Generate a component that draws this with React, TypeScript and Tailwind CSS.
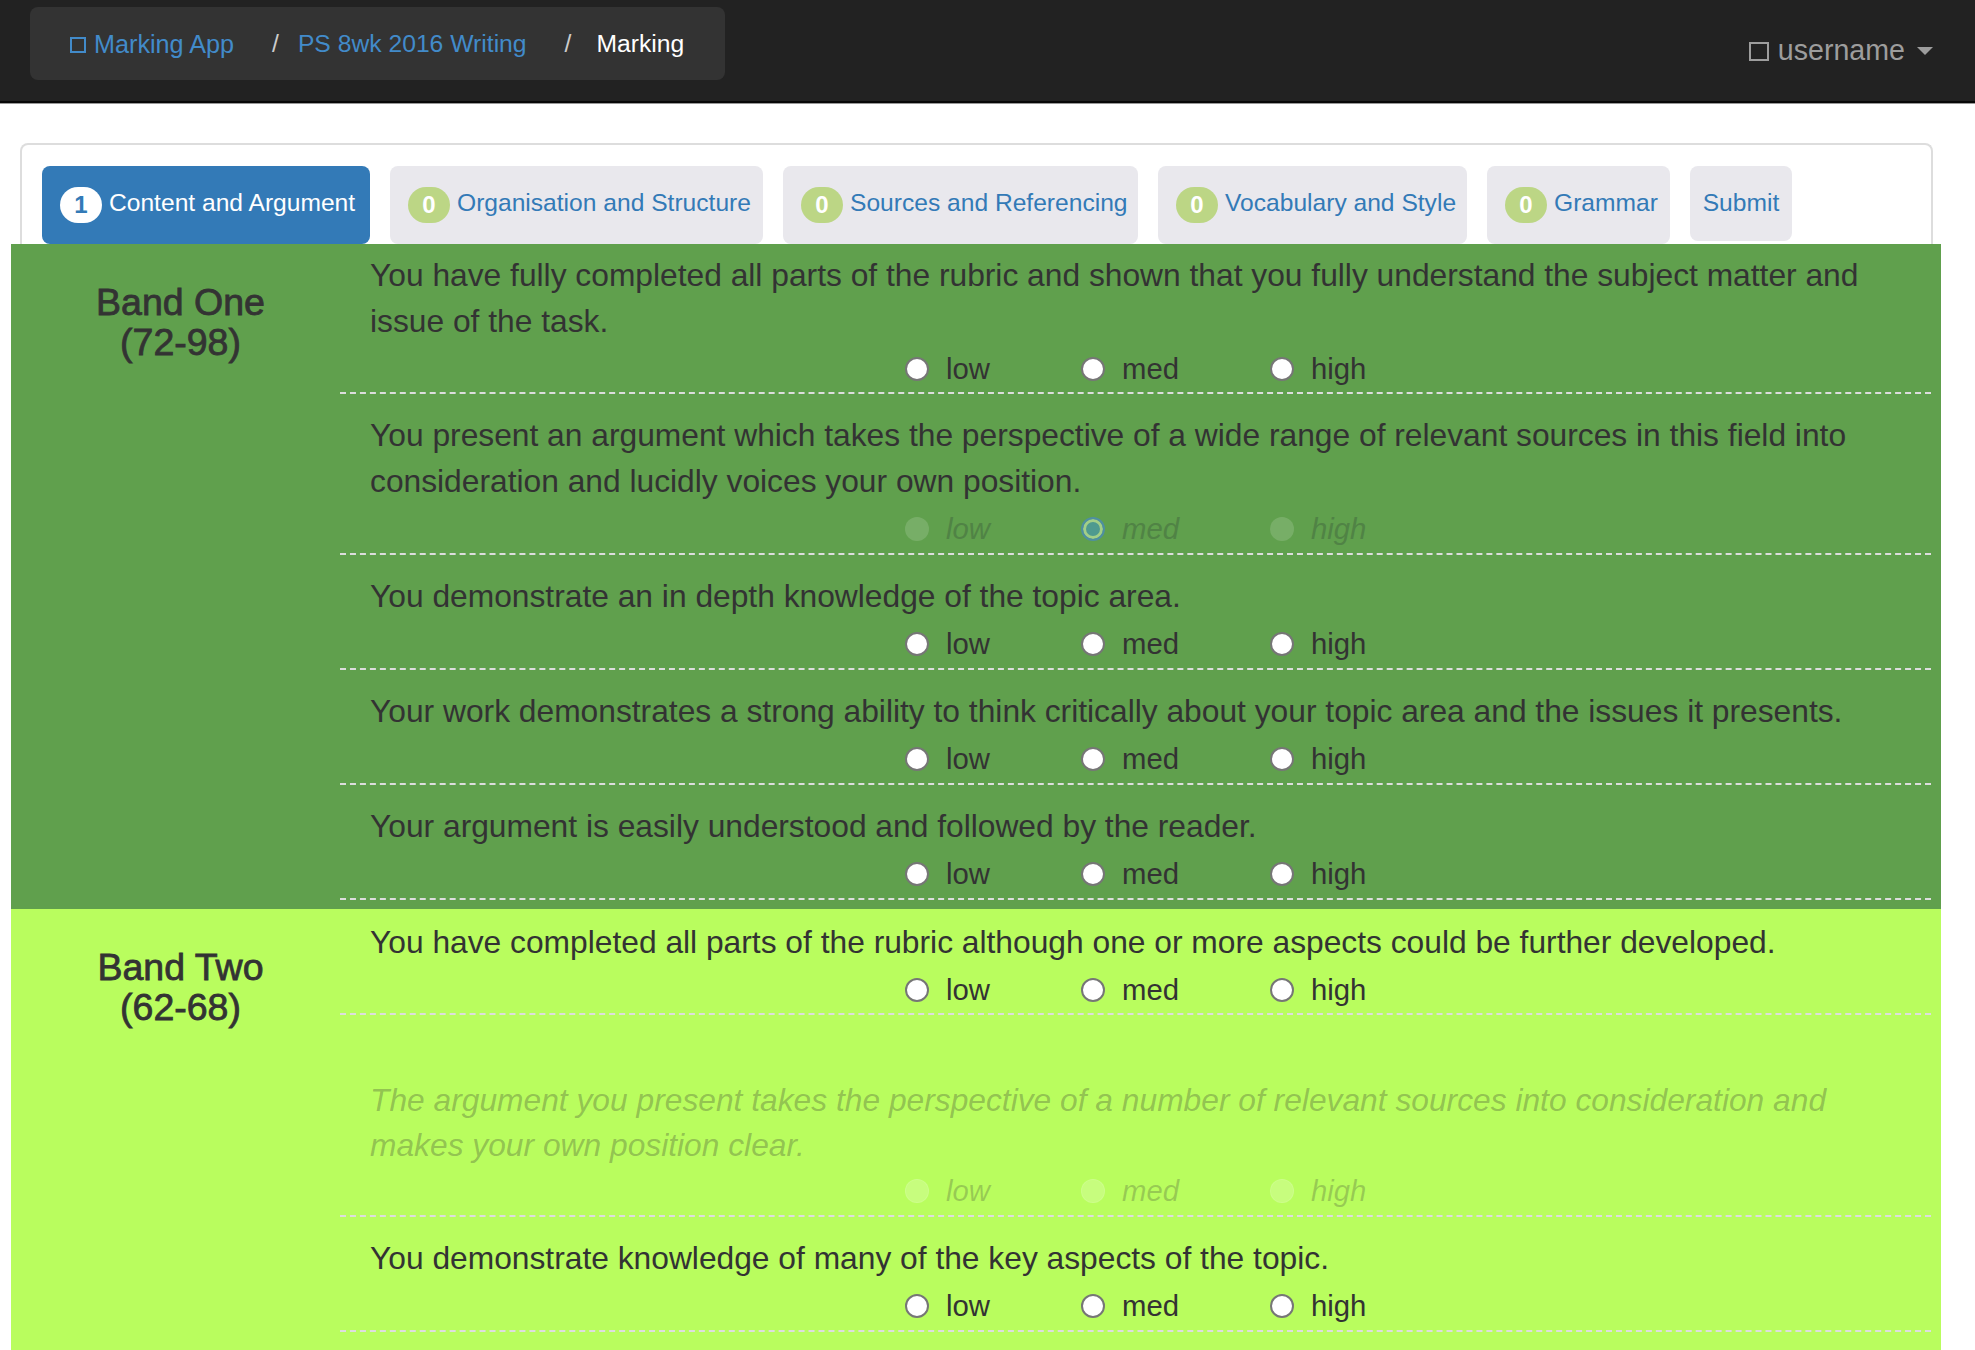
import React from 'react';

type Option = 'low' | 'med' | 'high';

interface Row {
  text: string[];
  muted?: 'options' | 'all';
  selected?: Option;
  pad?: string;
}

interface Band {
  name: string;
  range: string;
  color: string;
  rows: Row[];
}

const tabs = [
  { label: 'Organisation and Structure', width: 'w-[373px]' },
  { label: 'Sources and Referencing', width: 'w-[355px]' },
  { label: 'Vocabulary and Style', width: 'w-[309px]' },
  { label: 'Grammar', width: 'w-[183px]' },
];

const bands: Band[] = [
  {
    name: 'Band One',
    range: '(72-98)',
    color: 'bg-[#60a04d]',
    rows: [
      {
        text: [
          'You have fully completed all parts of the rubric and shown that you fully understand the subject matter and',
          'issue of the task.',
        ],
        pad: 'pt-[8px]',
      },
      {
        text: [
          'You present an argument which takes the perspective of a wide range of relevant sources in this field into',
          'consideration and lucidly voices your own position.',
        ],
        muted: 'options',
        selected: 'med',
      },
      { text: ['You demonstrate an in depth knowledge of the topic area.'] },
      { text: ['Your work demonstrates a strong ability to think critically about your topic area and the issues it presents.'] },
      { text: ['Your argument is easily understood and followed by the reader.'] },
    ],
  },
  {
    name: 'Band Two',
    range: '(62-68)',
    color: 'bg-[#b9fd5e] min-h-[460px]',
    rows: [
      {
        text: ['You have completed all parts of the rubric although one or more aspects could be further developed.'],
        pad: 'pt-[10px]',
      },
      {
        text: [
          'The argument you present takes the perspective of a number of relevant sources into consideration and',
          'makes your own position clear.',
        ],
        muted: 'all',
        pad: 'pt-[63px] pb-[1px]',
      },
      { text: ['You demonstrate knowledge of many of the key aspects of the topic.'] },
    ],
  },
];

const options: { value: Option; width: string }[] = [
  { value: 'low', width: 'w-[176px]' },
  { value: 'med', width: 'w-[189px]' },
  { value: 'high', width: 'w-[100px]' },
];

const Badge = ({ value, active }: { value: number; active?: boolean }) => (
  <span
    className={`flex h-9 w-[42px] shrink-0 items-center justify-center rounded-full text-[24px] font-bold ${
      active ? 'bg-white text-[#337ab7]' : 'bg-[#bcd685] text-white'
    }`}
  >
    {value}
  </span>
);

const Options = ({ row }: { row: Row }) => (
  <div
    className={`flex h-[46px] items-center pl-[565px] text-[29.3px] ${row.muted ? 'italic' : ''} ${
      row.muted === 'all' ? '' : 'mt-[2px]'
    }`}
  >
    {options.map(({ value, width }) => {
      const checked = row.selected === value;
      return (
        <label key={value} className={`flex items-center gap-[17px] ${width}`}>
          <input
            type="radio"
            readOnly
            checked={checked}
            disabled={!!row.muted}
            className={`h-[24px] w-[24px] appearance-none rounded-full ${
              checked
                ? 'border-2 border-[#4f8f9f] bg-[#4f9a8f] shadow-[inset_0_0_0_3px_#a3cf87]'
                : row.muted === 'options'
                  ? 'bg-white/15'
                  : row.muted === 'all'
                    ? 'border border-white/10 bg-white/20'
                    : 'border-2 border-[#767676] bg-white'
            }`}
          />
          <span
            className={
              row.muted === 'options' ? 'text-[#508345]' : row.muted === 'all' ? 'text-[#333]/25' : 'text-[#333]'
            }
          >
            {value}
          </span>
        </label>
      );
    })}
  </div>
);

const Statement = ({ row }: { row: Row }) => (
  <div className={`border-b-2 border-dashed border-[#ddd] ${row.pad ?? 'pt-[18px] pb-[1px]'}`}>
    <div className={`pl-[30px] ${row.muted === 'all' ? 'italic leading-[45px] text-[#333]/30' : 'text-[#333]'}`}>
      {row.text.map(line => (
        <p key={line} className="whitespace-nowrap">{line}</p>
      ))}
    </div>
    <Options row={row} />
  </div>
);

const App: React.FC = () => {
  return (
    <div className="h-[1350px] overflow-hidden bg-white font-['Liberation_Sans',Arial,sans-serif] text-[31.75px] leading-[46px]">
      <nav className="flex h-[103px] items-start justify-between border-b-2 border-[#080808] bg-[#222] pl-[30px] pr-[42px] pt-[7px] shadow-[0_1px_0_#999]">
        <div className="flex h-[73px] w-[695px] items-center rounded-lg bg-[#333] pl-10 text-[24.7px]">
          <a className="flex items-center text-[25.2px] text-[#428bca]">
            <span className="mr-2 mt-[3px] h-4 w-4 border-2 border-[#428bca]" />
            Marking App
          </a>
          <span className="ml-[38px] mr-[19px] text-[#ccc]">/</span>
          <a className="text-[#428bca]">PS 8wk 2016 Writing</a>
          <span className="ml-[38px] mr-[25px] text-[#ccc]">/</span>
          <span className="text-white">Marking</span>
        </div>
        <div className="mt-5 flex items-center text-[28.6px] text-[#9d9d9d]">
          <span className="mr-[9px] mt-[2px] h-[19px] w-5 border-2 border-[#9d9d9d]" />
          username
          <span className="ml-3 mt-[2px] h-0 w-0 border-x-[8px] border-t-[8px] border-x-transparent border-t-[#9d9d9d]" />
        </div>
      </nav>

      <main className="pt-10">
        <div className="mx-5 mr-[42px] flex gap-5 rounded-t-lg border-2 border-b-0 border-[#ddd] pl-5 pt-[21px] text-[24.6px] leading-[36px]">
          <a className="flex h-[78px] w-[328px] items-start gap-[7px] rounded-lg bg-[#337ab7] pl-[18px] pt-[21px] text-white">
            <Badge value={1} active />
            <span className="-mt-[2px] whitespace-nowrap">Content and Argument</span>
          </a>
          {tabs.map(tab => (
            <a
              key={tab.label}
              className={`flex h-[78px] items-start gap-[7px] rounded-lg bg-[#e9e8ed] pl-[18px] pt-[21px] text-[#337ab7] ${tab.width}`}
            >
              <Badge value={0} />
              <span className="-mt-[2px] whitespace-nowrap">{tab.label}</span>
            </a>
          ))}
          <a className="flex h-[75px] w-[102px] justify-center rounded-lg bg-[#e9e8ed] pt-[19px] text-[#337ab7]">Submit</a>
        </div>

        <div className="mx-[11px] w-[1930px]">
          {bands.map(band => (
            <section key={band.name} className={`flex pb-[9px] pr-[10px] ${band.color}`}>
              <h2 className="w-[329px] shrink-0 pl-[10px] pt-[38px] text-center text-[37.5px] leading-[40px] text-[#333] [-webkit-text-stroke:0.8px_#333]">
                {band.name}
                <br />
                {band.range}
              </h2>
              <div className="min-w-0 flex-1">
                {band.rows.map(row => (
                  <Statement key={row.text[0]} row={row} />
                ))}
              </div>
            </section>
          ))}
        </div>
      </main>
    </div>
  );
};

export default App;
